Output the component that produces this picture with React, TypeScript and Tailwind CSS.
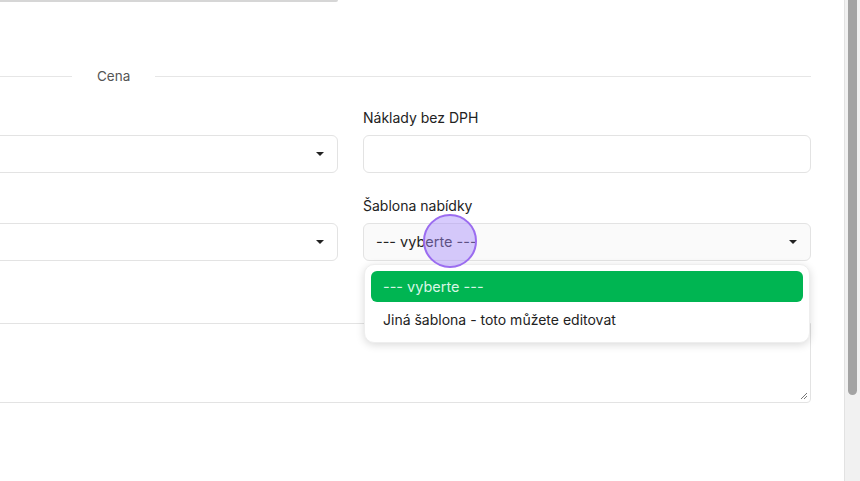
import React from "react";

const Caret = () => (
  <svg width="8" height="4" viewBox="0 0 8 4" className="shrink-0">
    <path d="M0 0h8L4 4z" fill="#222" />
  </svg>
);

const SelectBox: React.FC<{ value?: string; muted?: boolean }> = ({ value, muted }) => (
  <div
    className={`h-[38px] w-full rounded-md border border-[#e3e3e3] flex items-center justify-between pl-[12px] pr-[13px] text-[14.5px] text-[#222] ${
      muted ? "bg-[#fafafa]" : "bg-white"
    }`}
  >
    <span>{value ?? ""}</span>
    <Caret />
  </div>
);

const Label: React.FC<{ children: React.ReactNode }> = ({ children }) => (
  <div className="text-[14px] leading-[20px] text-[#222] mb-[7px]">{children}</div>
);

export default function App() {
  return (
    <div
      className="w-[860px] h-[481px] overflow-hidden bg-white flex"
      style={{ fontFamily: "Inter, 'Noto Sans', sans-serif" }}
    >
      <div className="flex-1 overflow-hidden relative">
        <div className="ml-[-110px] w-[921px]">
          {/* bottom edge of the block above */}
          <div className="w-[448px] h-[2px] bg-[#d6d6d6] rounded-br-[4px]" />

          {/* divider */}
          <div className="flex items-center mt-[64px] h-[20px]">
            <div className="w-[182px] h-px bg-[#e6e6e6]" />
            <span className="px-[25px] text-[13.5px] text-[#555]">Cena</span>
            <div className="flex-1 h-px bg-[#e6e6e6]" />
          </div>

          <div className="grid grid-cols-2 gap-x-[25px] mt-[22px]">
            <div>
              <div className="h-[20px] mb-[7px]" />
              <SelectBox />
            </div>
            <div>
              <Label>Náklady bez DPH</Label>
              <div className="h-[38px] rounded-md border border-[#e3e3e3] bg-white" />
            </div>

            <div className="mt-[23px]">
              <div className="h-[20px] mb-[7px]" />
              <SelectBox />
            </div>
            <div className="mt-[23px] relative">
              <Label>Šablona nabídky</Label>
              <SelectBox value="--- vyberte ---" muted />

              {/* open dropdown */}
              <div className="absolute left-[1px] right-[1px] top-[68px] z-20 bg-white rounded-[10px] shadow-[0_2px_8px_rgba(0,0,0,0.15)] border border-[#eee] p-[6px]">
                <div className="h-[31px] rounded-[6px] bg-[#00b552] text-[#d8f5e4] text-[14.5px] flex items-center px-[12px]">
                  --- vyberte ---
                </div>
                <div className="h-[34px] text-[14px] text-[#222] flex items-center px-[12px]">
                  Jiná šablona - toto můžete editovat
                </div>
              </div>

              {/* click marker */}
              <div className="absolute left-[60px] top-[18px] w-[54px] h-[54px] rounded-full bg-[rgba(167,139,250,0.45)] border-2 border-[#9b6cf0] z-30" />
            </div>
          </div>

          {/* textarea */}
          <div className="relative mt-[62px] h-[80px] border border-[#e3e3e3] rounded-br-[4px] bg-white">
            <svg className="absolute right-[2px] bottom-[2px]" width="8" height="8" viewBox="0 0 8 8">
              <path d="M1 7L7 1M4 7L7 4" stroke="#777" strokeWidth="1" />
            </svg>
          </div>
        </div>
      </div>

      {/* scrollbar */}
      <div className="w-[16px] h-full bg-[#f1f1f1] border-l border-[#e2e2e2] pl-[3px] pr-[3px]">
        <div className="w-[9px] h-[395px] bg-[#a3a3a3] rounded-b-full" />
      </div>
    </div>
  );
}
